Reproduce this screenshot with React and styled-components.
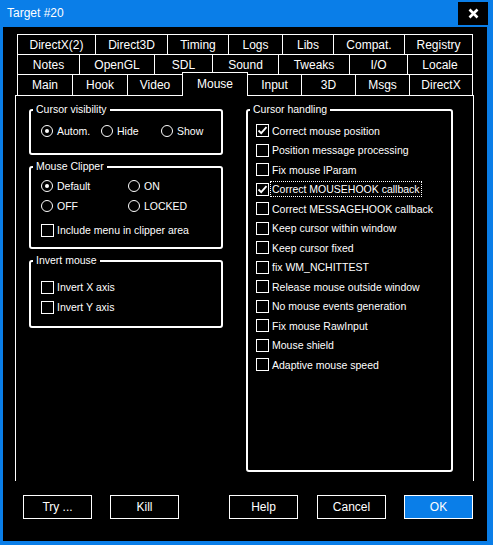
import styled, { createGlobalStyle } from 'styled-components'

const GlobalStyle = createGlobalStyle`
  html, body {
    margin: 0;
    padding: 0;
    background: #0a7ee8;
  }
  body {
    font-family: "Liberation Sans", Arial, sans-serif;
    color: #fff;
  }
`

const Window = styled.div`
  width: 493px;
  height: 545px;
  box-sizing: border-box;
  background: #0a7ee8;
  padding: 0 6px 4px 3px;
  display: flex;
  flex-direction: column;
`

const TitleBar = styled.div`
  height: 27px;
  display: flex;
  align-items: flex-start;
  justify-content: space-between;
`

const Title = styled.span`
  font-size: 12px;
  line-height: 26px;
  margin-left: 4px;
`

const CloseButton = styled.div`
  width: 30px;
  height: 23px;
  margin-top: 2px;
  margin-right: -1px;
  background: #000;
  display: flex;
  align-items: center;
  justify-content: center;
`

const Body = styled.div`
  flex: 1;
  background: #000;
  padding-top: 7px;
`

const TabRow = styled.div`
  display: flex;
  height: ${p => p.$h}px;
  margin-left: 14px;
`

const Tab = styled.div`
  box-sizing: border-box;
  width: ${p => p.$w}px;
  height: ${p => (p.$sel ? 24 : p.$h)}px;
  margin-left: ${p => (p.$first ? 0 : -1)}px;
  margin-top: ${p => (p.$sel ? -2 : 0)}px;
  padding-bottom: ${p => (p.$sel ? 1 : 0)}px;
  border: 1px solid #fff;
  border-bottom: none;
  background: #000;
  position: relative;
  z-index: ${p => (p.$sel ? 2 : 1)};
  display: flex;
  align-items: center;
  justify-content: center;
  font-size: 12px;
  white-space: nowrap;
`

const Panel = styled.div`
  box-sizing: border-box;
  margin-left: 12px;
  width: 459px;
  height: 386px;
  border: 1px solid #fff;
  border-bottom: none;
  padding: 13px 0 0 13px;
  display: flex;
  gap: 23px;
  align-items: flex-start;
`

const Column = styled.div`
  display: flex;
  flex-direction: column;
  gap: 11px;
`

const GroupBox = styled.div`
  position: relative;
  box-sizing: border-box;
  width: ${p => p.$w}px;
  height: ${p => p.$h}px;
  border: 2px solid #fff;
  border-radius: 3px;
  padding: ${p => p.$pt}px 0 0 ${p => p.$pl}px;
`

const GroupLabel = styled.span`
  position: absolute;
  left: 2px;
  top: -8px;
  padding: 0 3px;
  background: #000;
  font-size: 10.5px;
  line-height: 13px;
  white-space: nowrap;
`

const OptionGrid = styled.div`
  display: grid;
  grid-template-columns: ${p => p.$cols};
  grid-auto-rows: 20px;
`

const Option = styled.label`
  display: flex;
  align-items: center;
  height: ${p => p.$h || 20}px;
  margin-top: ${p => p.$mt || 0}px;
  font-size: 10.5px;
  white-space: nowrap;
`

const RadioCircle = styled.span`
  box-sizing: border-box;
  width: 12px;
  height: 12px;
  border: 1px solid #fff;
  border-radius: 50%;
  margin-right: 4px;
  display: flex;
  align-items: center;
  justify-content: center;
  &::after {
    content: '';
    width: 4px;
    height: 4px;
    border-radius: 50%;
    background: ${p => (p.$on ? '#fff' : 'transparent')};
  }
`

const Box = styled.span`
  box-sizing: border-box;
  width: 13px;
  height: 13px;
  border: 1px solid #fff;
  margin-right: 3px;
  display: flex;
  align-items: center;
  justify-content: center;
`

const Focus = styled.span`
  outline: 1px dotted #fff;
  outline-offset: 0;
  padding: 0 1px;
  margin-left: -1px;
  line-height: 14px;
`

const ButtonRow = styled.div`
  display: flex;
  margin-top: 14px;
  padding-left: 20px;
`

const Button = styled.div`
  box-sizing: border-box;
  width: 69px;
  height: 24px;
  margin-left: ${p => p.$ml}px;
  border: 1px solid #fff;
  background: ${p => (p.$primary ? '#0a7ee8' : '#000')};
  display: flex;
  align-items: center;
  justify-content: center;
  font-size: 12px;
`

const tabRows = [
  [['DirectX(2)', 17, 95], ['Direct3D', 95, 167], ['Timing', 167, 228], ['Logs', 228, 282], ['Libs', 282, 333], ['Compat.', 333, 404], ['Registry', 404, 472]],
  [['Notes', 17, 79], ['OpenGL', 79, 154], ['SDL', 154, 212], ['Sound', 212, 278], ['Tweaks', 278, 349], ['I/O', 349, 407], ['Locale', 407, 472]],
  [['Main', 17, 72], ['Hook', 72, 127], ['Video', 127, 182], ['Mouse', 182, 247], ['Input', 247, 301], ['3D', 301, 355], ['Msgs', 355, 409], ['DirectX', 409, 472]],
]

const handling = [
  ['Correct mouse position', true],
  ['Position message processing', false],
  ['Fix mouse lParam', false],
  ['Correct MOUSEHOOK callback', true, true],
  ['Correct MESSAGEHOOK callback', false],
  ['Keep cursor within window', false],
  ['Keep cursor fixed', false],
  ['fix WM_NCHITTEST', false],
  ['Release mouse outside window', false],
  ['No mouse events generation', false],
  ['Fix mouse RawInput', false],
  ['Mouse shield', false],
  ['Adaptive mouse speed', false],
]

const Check = ({ on }) => (
  <Box>
    {on && (
      <svg width="11" height="11" viewBox="0 0 11 11">
        <path d="M1.5 5.5 L4.2 8.2 L9.5 2.2" fill="none" stroke="#fff" strokeWidth="1.8" />
      </svg>
    )}
  </Box>
)

const Radio = ({ on, children }) => (
  <Option>
    <RadioCircle $on={on} />
    {children}
  </Option>
)

const CheckOption = ({ on, focus, h, mt, children }) => (
  <Option $h={h} $mt={mt}>
    <Check on={on} />
    {focus ? <Focus>{children}</Focus> : children}
  </Option>
)

export default function App() {
  return (
    <>
      <GlobalStyle />
      <Window>
        <TitleBar>
          <Title>Target #20</Title>
          <CloseButton>
            <svg width="11" height="11" viewBox="0 0 11 11">
              <path d="M1.5 1.5 L9.5 9.5 M9.5 1.5 L1.5 9.5" stroke="#fff" strokeWidth="2.6" />
            </svg>
          </CloseButton>
        </TitleBar>
        <Body>
          {tabRows.map((row, ri) => (
            <TabRow key={ri} $h={ri === 2 ? 21 : 20}>
              {row.map(([name, l, r], i) => (
                <Tab
                  key={name}
                  $w={r - l + 1}
                  $h={ri === 2 ? 21 : 20}
                  $first={i === 0}
                  $sel={name === 'Mouse'}
                >
                  {name}
                </Tab>
              ))}
            </TabRow>
          ))}
          <Panel>
            <Column>
              <GroupBox $w={194} $h={46} $pt={10} $pl={10}>
                <GroupLabel>Cursor visibility</GroupLabel>
                <OptionGrid $cols="60px 60px auto">
                  <Radio on>Autom.</Radio>
                  <Radio>Hide</Radio>
                  <Radio>Show</Radio>
                </OptionGrid>
              </GroupBox>
              <GroupBox $w={194} $h={83} $pt={8} $pl={10}>
                <GroupLabel>Mouse Clipper</GroupLabel>
                <OptionGrid $cols="87px 87px">
                  <Radio on>Default</Radio>
                  <Radio>ON</Radio>
                  <Radio>OFF</Radio>
                  <Radio>LOCKED</Radio>
                </OptionGrid>
                <CheckOption mt={4}>Include menu in clipper area</CheckOption>
              </GroupBox>
              <GroupBox $w={194} $h={68} $pt={15} $pl={10}>
                <GroupLabel>Invert mouse</GroupLabel>
                <CheckOption>Invert X axis</CheckOption>
                <CheckOption>Invert Y axis</CheckOption>
              </GroupBox>
            </Column>
            <GroupBox $w={207} $h={363} $pt={10} $pl={8}>
              <GroupLabel>Cursor handling</GroupLabel>
              {handling.map(([text, on, focus]) => (
                <CheckOption key={text} on={on} focus={focus} h={19.5}>
                  {text}
                </CheckOption>
              ))}
            </GroupBox>
          </Panel>
          <ButtonRow>
            <Button $ml={0}>Try ...</Button>
            <Button $ml={18}>Kill</Button>
            <Button $ml={50}>Help</Button>
            <Button $ml={19}>Cancel</Button>
            <Button $ml={18} $primary>OK</Button>
          </ButtonRow>
        </Body>
      </Window>
    </>
  )
}
